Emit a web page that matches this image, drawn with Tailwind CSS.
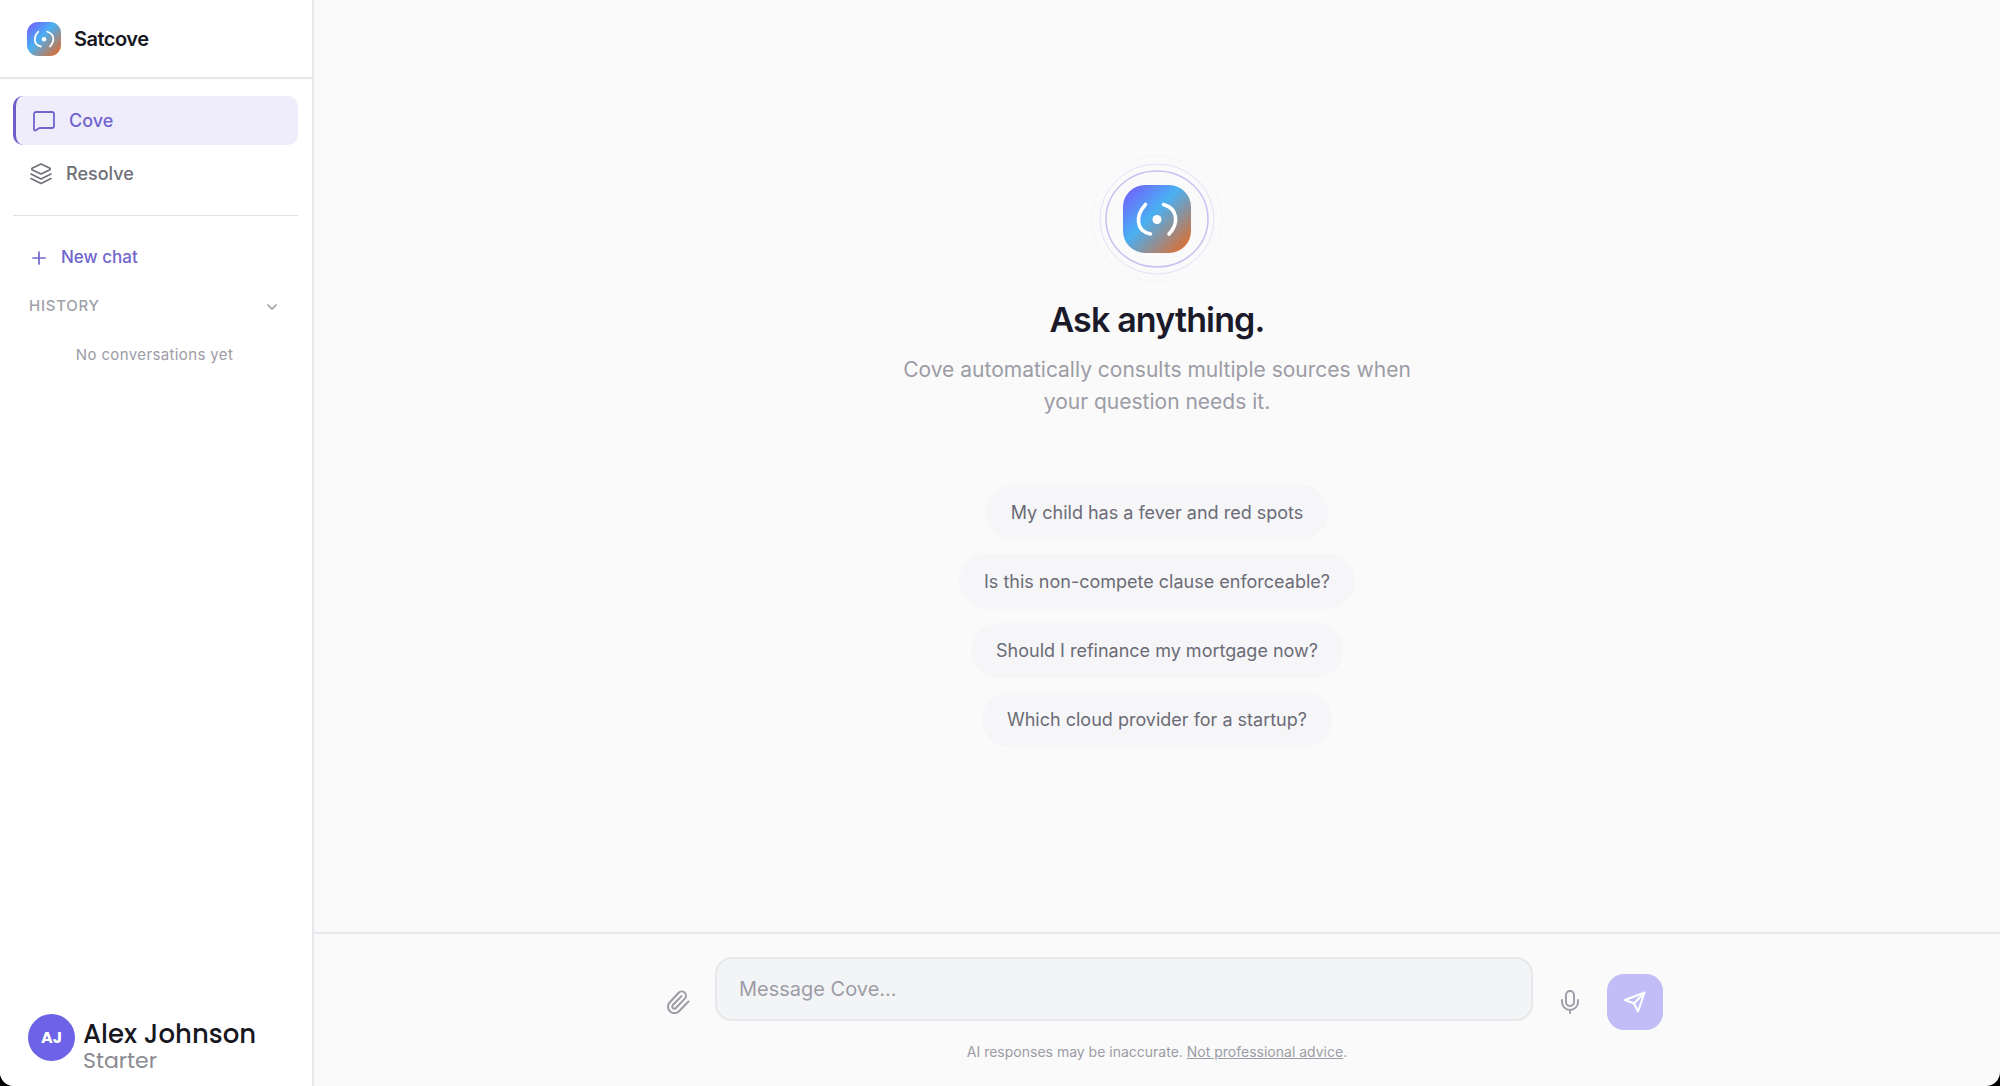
<!DOCTYPE html>
<html lang="en">
<head>
<meta charset="utf-8">
<meta name="viewport" content="width=device-width, initial-scale=1">
<title>Satcove</title>
<script src="https://cdn.jsdelivr.net/npm/@tailwindcss/browser@4"></script>
</head>
<body class="bg-black font-['Inter',sans-serif] antialiased">
<svg class="absolute h-0 w-0" aria-hidden="true">
  <defs>
    <linearGradient id="brand" x1="0" y1="0" x2="1" y2="1">
      <stop offset="0.1" stop-color="#6c6bfa"/>
      <stop offset="0.43" stop-color="#49b0f3"/>
      <stop offset="0.88" stop-color="#cf7443"/>
    </linearGradient>
    <symbol id="logo" viewBox="0 0 68 68">
      <rect width="68" height="68" rx="22" fill="url(#brand)"/>
      <g fill="none" stroke="#fff" stroke-width="3.6" stroke-linecap="round">
        <path d="M22.500 19.500C12 31 13 46 27.500 49"/>
        <path d="M40.500 19.500c14 4 16 18 5.500 29.500"/>
      </g>
      <circle cx="34" cy="34.500" r="4.500" fill="#fff"/>
    </symbol>
  </defs>
</svg>
<div class="flex min-h-screen overflow-hidden rounded-b-[14px] bg-[#fafafa]">
  <aside class="flex w-[314px] shrink-0 flex-col border-r-2 border-[#e8e9ec] bg-white">
    <header class="flex h-[79px] items-center gap-[13px] border-b-2 border-[#e5e7eb] px-[27px]">
      <svg class="size-[34px]" aria-hidden="true"><use href="#logo"/></svg>
      <span class="text-xl font-semibold tracking-tight text-[#17171f]">Satcove</span>
    </header>
    <nav class="mr-3.5 ml-[13px] mt-[17px] flex flex-col gap-1 border-b border-[#dfe0e4] pb-[17px] text-lg font-medium">
      <a href="#" class="flex h-[49px] items-center gap-[13px] rounded-[10px] border-l-3 border-[#6c5fc9] bg-[#efedfc] px-4 text-[#7065cc]">
        <svg class="size-6" viewBox="0 0 24 24" fill="none" stroke="currentColor" stroke-width="1.8" stroke-linecap="round" stroke-linejoin="round" aria-hidden="true"><path d="M22 17a2 2 0 0 1-2 2H7.500L3.500 21.500Q2 22 2 20V5a2 2 0 0 1 2-2h16a2 2 0 0 1 2 2z"/></svg>
        Cove
      </a>
      <a href="#" class="flex h-[49px] items-center gap-[13px] rounded-[10px] px-4 text-[#6f6f78]">
        <svg class="size-6" viewBox="0 0 24 24" fill="none" stroke="currentColor" stroke-width="1.6" stroke-linecap="round" stroke-linejoin="round" aria-hidden="true"><path d="M12 2 3.500 6q-1.500 1 0 2L12 12l8.500-4q1.500-1 0-2z"/><path d="m2 16.500 10 5 10-5"/><path d="m2 12 10 5 10-5"/></svg>
        Resolve
      </a>
    </nav>
    <section class="flex flex-col pr-4 pl-[13px] pt-[17px]">
      <button type="button" class="flex h-[49px] items-center gap-3 px-4 text-[17px] font-medium text-[#7065cc]">
        <svg class="size-5" viewBox="0 0 20 20" fill="none" stroke="currentColor" stroke-width="1.7" stroke-linecap="round" aria-hidden="true"><path d="M10 4v12M4 10h12"/></svg>
        New chat
      </button>
      <button type="button" class="flex h-[49px] items-center justify-between px-4 text-[15px] font-medium tracking-wider text-[#a0a0a8]">
        HISTORY
        <svg class="size-4" viewBox="0 0 16 16" fill="none" stroke="currentColor" stroke-width="1.700" stroke-linecap="round" stroke-linejoin="round" aria-hidden="true"><path d="m4 6 4 4 4-4"/></svg>
      </button>
      <p class="py-3 text-center text-[15px] leading-6 tracking-wide text-[#9c9ca6]">No conversations yet</p>
    </section>
    <footer class="mt-auto flex items-start gap-2 px-7 pb-3">
      <span class="grid size-[47px] shrink-0 place-items-center rounded-full bg-[#6c63e6] font-['Poppins','Inter',sans-serif] text-base font-bold text-white">AJ</span>
      <div class="pt-1.5 font-['Poppins','Inter',sans-serif]">
        <p class="text-[26px] leading-7 font-medium text-[#17171f]">Alex Johnson</p>
        <p class="text-[22px] leading-[26px] text-[#8a8a90]">Starter</p>
      </div>
    </footer>
  </aside>
  <main class="flex min-w-0 flex-1 flex-col">
    <section class="flex flex-1 flex-col items-center justify-center px-6">
      <div class="relative size-[68px]">
        <svg class="absolute -inset-8 size-[132px]" viewBox="0 0 132 132" fill="none" stroke="#6c5fe0" aria-hidden="true">
          <ellipse cx="66" cy="66" rx="51" ry="48" stroke-width="1.500" stroke-opacity=".36"/>
          <ellipse cx="66" cy="66" rx="57" ry="55" stroke-opacity=".16"/>
          <ellipse cx="66" cy="66" rx="65" ry="63" stroke-opacity=".04"/>
        </svg>
        <svg class="relative size-[68px]" aria-hidden="true"><use href="#logo"/></svg>
      </div>
      <h1 class="mt-11 text-[34px] leading-[46px] font-semibold tracking-tight text-[#1a1a2a]">Ask anything.</h1>
      <p class="mt-[11px] w-[540px] max-w-full text-center text-[21px] leading-8 text-[#9c9ca6]">Cove automatically consults multiple sources when your question needs it.</p>
      <div class="mt-[67px] flex flex-col items-center gap-3.5 text-lg text-[#6b6b76]">
        <button type="button" class="h-[55px] rounded-full bg-[#f6f6f9] px-[25px]">My child has a fever and red spots</button>
        <button type="button" class="h-[55px] rounded-full bg-[#f6f6f9] px-[25px]">Is this non-compete clause enforceable?</button>
        <button type="button" class="h-[55px] rounded-full bg-[#f6f6f9] px-[25px]">Should I refinance my mortgage now?</button>
        <button type="button" class="h-[55px] rounded-full bg-[#f6f6f9] px-[25px]">Which cloud provider for a startup?</button>
      </div>
    </section>
    <footer class="border-t-2 border-[#e8e9ec] px-6 pt-[23px] pb-6">
      <form class="mx-auto flex max-w-[1012px] items-end gap-2.5">
        <button type="button" aria-label="Attach file" class="grid h-14 w-[54px] shrink-0 place-items-center text-[#9c9ca6]">
          <svg class="size-6" viewBox="0 0 24 24" fill="none" stroke="currentColor" stroke-width="2" stroke-linecap="round" stroke-linejoin="round" aria-hidden="true"><path d="m22.500 11.500-9.500 9.700a6.300 6.300 0 0 1-9.200-9l8.900-9.500a4.200 4.200 0 0 1 6.100 5.900l-8.900 9.400a2.100 2.100 0 0 1-3-3l8.600-8.900"/></svg>
        </button>
        <div class="flex min-w-0 flex-1 pb-[9px]">
          <textarea rows="1" aria-label="Message Cove" placeholder="Message Cove..." class="h-16 w-full resize-none rounded-[17px] border-2 border-[#e7e8eb] bg-[#f3f4f6] px-[22px] py-4 text-xl leading-7 placeholder:text-[#9c9ca6]"></textarea>
        </div>
        <button type="button" aria-label="Dictate" class="grid h-14 w-[54px] shrink-0 place-items-center text-[#9c9ca6]">
          <svg class="size-6" viewBox="0 0 24 24" fill="none" stroke="currentColor" stroke-width="1.900" stroke-linecap="round" stroke-linejoin="round" aria-hidden="true"><rect x="8" y="1" width="8" height="15" rx="4"/><path d="M4 10v2a8 8 0 0 0 16 0v-2M12 20v3"/></svg>
        </button>
        <button type="submit" aria-label="Send" class="grid size-14 shrink-0 place-items-center rounded-[17px] bg-[#c2bdf7] text-white">
          <svg class="size-6" viewBox="0 0 24 24" fill="none" stroke="currentColor" stroke-width="2" stroke-linecap="round" stroke-linejoin="round" aria-hidden="true"><path d="M21.500 2.500 15 21.500l-4-8-9-3.500zM21.500 2.500 11 13.500"/></svg>
        </button>
      </form>
      <p class="mt-3 text-center text-sm leading-5 text-[#9c9ca6]">AI responses may be inaccurate. <a href="#" class="underline">Not professional advice</a>.</p>
    </footer>
  </main>
</div>
</body>
</html>
